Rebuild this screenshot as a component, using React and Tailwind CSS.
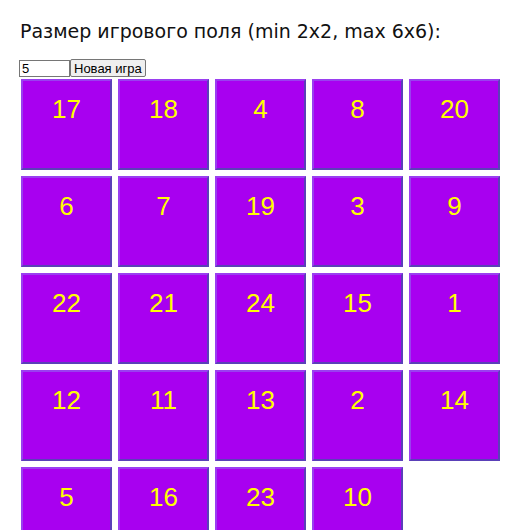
const tiles = [17, 18, 4, 8, 20, 6, 7, 19, 3, 9, 22, 21, 24, 15, 1, 12, 11, 13, 2, 14, 5, 16, 23, 10, null];

const Tile = ({ n }) =>
    n === null ? (
        <div className="w-[91px] h-[91px]" />
    ) : (
        <div className="w-[91px] h-[91px] bg-[#a800f0] border-2 border-t-[#9a3ff0] border-l-[#9a3ff0] border-r-[#5a40b8] border-b-[#5a40b8] flex items-start justify-center pt-[9px] text-[26px] text-[#ffff00] font-['Liberation_Sans',Arial,sans-serif]">
            {n}
        </div>
    );

export default function App() {
    return (
        <div className="bg-white min-h-[530px] font-['Liberation_Sans',Arial,sans-serif]">
            <h1 className="pl-[20px] pt-[19px] text-[19px] leading-[24px] text-[#111] font-['DejaVu_Sans',Verdana,sans-serif]">
                Размер игрового поля (min 2x2, max 6x6):
            </h1>
            <div className="flex items-center pl-[19px] mt-[16px]">
                <input defaultValue="5" className="w-[51px] h-[17px] border border-[#767676] text-[13px] px-[2px] leading-none outline-none" />
                <button className="h-[18px] px-[3px] border border-[#767676] bg-[#efefef] text-[13px] leading-none text-black rounded-[2px]">
                    Новая игра
                </button>
            </div>
            <div className="grid grid-cols-[repeat(5,91px)] gap-[6px] pl-[21px] pt-[2px]">
                {tiles.map((n, i) => (
                    <Tile key={i} n={n} />
                ))}
            </div>
        </div>
    );
}
